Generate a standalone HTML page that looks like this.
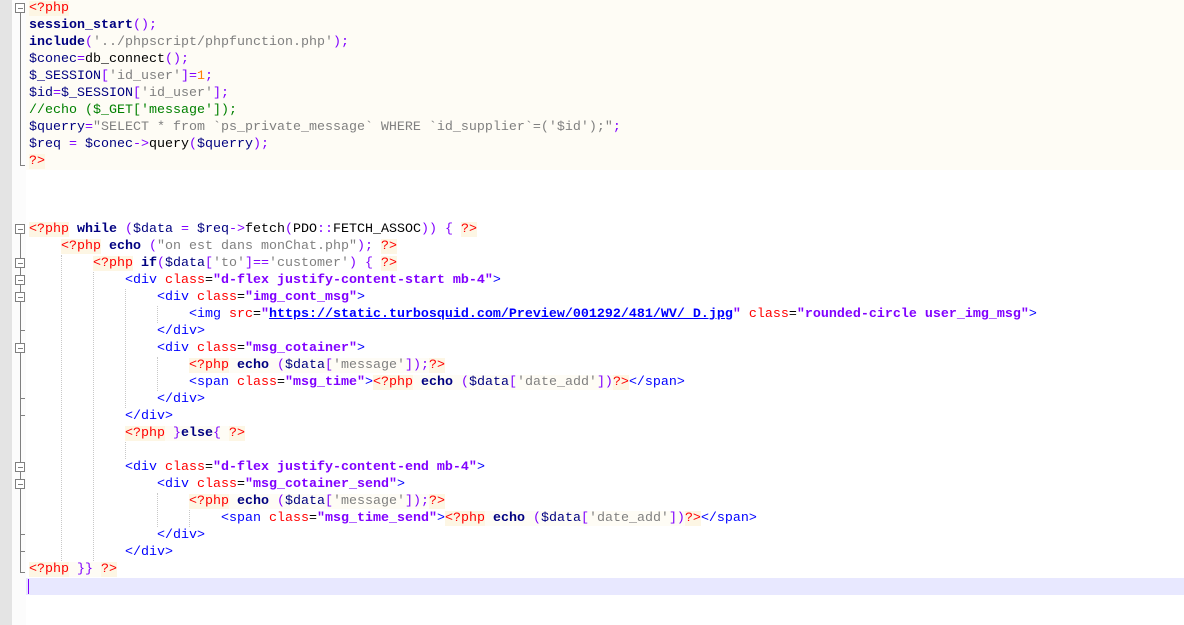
<!DOCTYPE html>
<html><head><meta charset="utf-8"><style>
html,body{margin:0;padding:0;width:1184px;height:625px;overflow:hidden;background:#fff;}
#g{position:absolute;left:0;top:0;width:12px;height:625px;background:#e4e4e4;}
#f{position:absolute;left:12px;top:0;width:14px;height:625px;background:#fcfcfc;}
.l{position:absolute;left:29px;height:17px;line-height:17px;white-space:pre;font-family:"Liberation Mono",monospace;font-size:13.33px;color:#000;}
.bg{position:absolute;left:26px;right:0;background:#fefcf5;}
.d{color:#ff0000;background:#fdf6e4}
.k{color:#000080;font-weight:bold}
.v{color:#000080}
.s{color:#808080}
.o{color:#8000ff}
.n{color:#ff8000}
.c{color:#008000}
.t{color:#0000ff}
.a{color:#ff0000}
.q{color:#8000ff;font-weight:bold}
.u{color:#0000ff;text-decoration:underline}
.box{position:absolute;left:15px;width:8px;height:8px;border:1px solid #808080;background:#fff;}
.box:after{content:"";position:absolute;left:2px;top:4px;width:5px;height:1px;background:#808080;}
.vl{position:absolute;left:20px;width:1px;background:#808080;}
.tk{position:absolute;left:20px;width:5px;height:1px;background:#808080;}
.ig{position:absolute;width:0;border-left:1px dotted #c8c8c8;}
</style></head><body>
<div id="g"></div><div id="f"></div>
<div class="bg" style="top:0;height:170px"></div>
<div style="position:absolute;left:26px;right:0;top:578px;height:17px;background:#e8e8ff"></div>
<div style="position:absolute;left:28px;top:579px;width:1px;height:15px;background:#8000ff"></div>

<div class="vl" style="top:12px;height:153px"></div><div class="tk" style="top:165px"></div>
<div class="vl" style="top:233px;height:339px"></div><div class="tk" style="top:572px"></div>
<div class="box" style="top:3px"></div>
<div class="box" style="top:224px"></div>
<div class="box" style="top:258px"></div>
<div class="box" style="top:275px"></div>
<div class="box" style="top:292px"></div>
<div class="box" style="top:343px"></div>
<div class="box" style="top:462px"></div>
<div class="box" style="top:479px"></div>
<div class="tk" style="top:330px"></div>
<div class="tk" style="top:398px"></div>
<div class="tk" style="top:415px"></div>
<div class="tk" style="top:534px"></div>
<div class="tk" style="top:551px"></div>

<div class="ig" style="left:61px;top:255px;height:306px"></div>
<div class="ig" style="left:93px;top:272px;height:289px"></div>
<div class="ig" style="left:125px;top:289px;height:119px"></div>
<div class="ig" style="left:157px;top:306px;height:17px"></div>
<div class="ig" style="left:157px;top:357px;height:34px"></div>
<div class="ig" style="left:125px;top:442px;height:17px"></div>
<div class="ig" style="left:157px;top:493px;height:34px"></div>
<div class="ig" style="left:189px;top:510px;height:17px"></div>

<div class="l" style="top:0"><span class="d">&lt;?php</span></div>
<div class="l" style="top:17px"><span class="k">session_start</span><span class="o">();</span></div>
<div class="l" style="top:34px"><span class="k">include</span><span class="o">(</span><span class="s">'../phpscript/phpfunction.php'</span><span class="o">);</span></div>
<div class="l" style="top:51px"><span class="v">$conec</span><span class="o">=</span>db_connect<span class="o">();</span></div>
<div class="l" style="top:68px"><span class="v">$_SESSION</span><span class="o">[</span><span class="s">'id_user'</span><span class="o">]=</span><span class="n">1</span><span class="o">;</span></div>
<div class="l" style="top:85px"><span class="v">$id</span><span class="o">=</span><span class="v">$_SESSION</span><span class="o">[</span><span class="s">'id_user'</span><span class="o">];</span></div>
<div class="l" style="top:102px"><span class="c">//echo ($_GET['message']);</span></div>
<div class="l" style="top:119px"><span class="v">$querry</span><span class="o">=</span><span class="s">"SELECT * from `ps_private_message` WHERE `id_supplier`=('$id');"</span><span class="o">;</span></div>
<div class="l" style="top:136px"><span class="v">$req</span> <span class="o">=</span> <span class="v">$conec</span><span class="o">-&gt;</span>query<span class="o">(</span><span class="v">$querry</span><span class="o">);</span></div>
<div class="l" style="top:153px"><span class="d">?&gt;</span></div>

<div class="l" style="top:221px"><span class="d">&lt;?php</span> <span class="k">while</span> <span class="o">(</span><span class="v">$data</span> <span class="o">=</span> <span class="v">$req</span><span class="o">-&gt;</span>fetch<span class="o">(</span>PDO<span class="o">::</span>FETCH_ASSOC<span class="o">))</span> <span class="o">{</span> <span class="d">?&gt;</span></div>
<div class="l" style="top:238px">    <span class="d">&lt;?php</span> <span class="k">echo</span> <span class="o">(</span><span class="s">"on est dans monChat.php"</span><span class="o">);</span> <span class="d">?&gt;</span></div>
<div class="l" style="top:255px">        <span class="d">&lt;?php</span> <span class="k">if</span><span class="o">(</span><span class="v">$data</span><span class="o">[</span><span class="s">'to'</span><span class="o">]==</span><span class="s">'customer'</span><span class="o">)</span> <span class="o">{</span> <span class="d">?&gt;</span></div>
<div class="l" style="top:272px">            <span class="t">&lt;div</span> <span class="a">class</span>=<span class="q">"d-flex justify-content-start mb-4"</span><span class="t">&gt;</span></div>
<div class="l" style="top:289px">                <span class="t">&lt;div</span> <span class="a">class</span>=<span class="q">"img_cont_msg"</span><span class="t">&gt;</span></div>
<div class="l" style="top:306px">                    <span class="t">&lt;img</span> <span class="a">src</span>=<span class="q">"<span class="u">https://static.turbosquid.com/Preview/001292/481/WV/_D.jpg</span>"</span> <span class="a">class</span>=<span class="q">"rounded-circle user_img_msg"</span><span class="t">&gt;</span></div>
<div class="l" style="top:323px">                <span class="t">&lt;/div&gt;</span></div>
<div class="l" style="top:340px">                <span class="t">&lt;div</span> <span class="a">class</span>=<span class="q">"msg_cotainer"</span><span class="t">&gt;</span></div>
<div class="l" style="top:357px">                    <span class="d">&lt;?php</span><span style="background:#fefcf5"> <span class="k">echo</span> <span class="o">(</span><span class="v">$data</span><span class="o">[</span><span class="s">'message'</span><span class="o">]);</span></span><span class="d">?&gt;</span></div>
<div class="l" style="top:374px">                    <span class="t">&lt;span</span> <span class="a">class</span>=<span class="q">"msg_time"</span><span class="t">&gt;</span><span class="d">&lt;?php</span><span style="background:#fefcf5"> <span class="k">echo</span> <span class="o">(</span><span class="v">$data</span><span class="o">[</span><span class="s">'date_add'</span><span class="o">])</span></span><span class="d">?&gt;</span><span class="t">&lt;/span&gt;</span></div>
<div class="l" style="top:391px">                <span class="t">&lt;/div&gt;</span></div>
<div class="l" style="top:408px">            <span class="t">&lt;/div&gt;</span></div>
<div class="l" style="top:425px">            <span class="d">&lt;?php</span><span style="background:#fefcf5"> <span class="o">}</span><span class="k">else</span><span class="o">{</span> </span><span class="d">?&gt;</span></div>
<div class="l" style="top:459px">            <span class="t">&lt;div</span> <span class="a">class</span>=<span class="q">"d-flex justify-content-end mb-4"</span><span class="t">&gt;</span></div>
<div class="l" style="top:476px">                <span class="t">&lt;div</span> <span class="a">class</span>=<span class="q">"msg_cotainer_send"</span><span class="t">&gt;</span></div>
<div class="l" style="top:493px">                    <span class="d">&lt;?php</span><span style="background:#fefcf5"> <span class="k">echo</span> <span class="o">(</span><span class="v">$data</span><span class="o">[</span><span class="s">'message'</span><span class="o">]);</span></span><span class="d">?&gt;</span></div>
<div class="l" style="top:510px">                        <span class="t">&lt;span</span> <span class="a">class</span>=<span class="q">"msg_time_send"</span><span class="t">&gt;</span><span class="d">&lt;?php</span><span style="background:#fefcf5"> <span class="k">echo</span> <span class="o">(</span><span class="v">$data</span><span class="o">[</span><span class="s">'date_add'</span><span class="o">])</span></span><span class="d">?&gt;</span><span class="t">&lt;/span&gt;</span></div>
<div class="l" style="top:527px">                <span class="t">&lt;/div&gt;</span></div>
<div class="l" style="top:544px">            <span class="t">&lt;/div&gt;</span></div>
<div class="l" style="top:561px"><span class="d">&lt;?php</span><span style="background:#fefcf5"> <span class="o">}}</span> </span><span class="d">?&gt;</span></div>
</body></html>
